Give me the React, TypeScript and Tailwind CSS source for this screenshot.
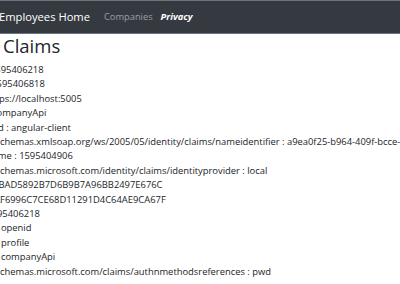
const claims = [
  "nbf : 1595406218",
  "exp : 1595406818",
  "iss : https://localhost:5005",
  "aud : companyApi",
  "client_id : angular-client",
  "http://schemas.xmlsoap.org/ws/2005/05/identity/claims/nameidentifier : a9ea0f25-b964-409f-bcce-c923266249b4",
  "auth_time : 1595404906",
  "http://schemas.microsoft.com/identity/claims/identityprovider : local",
  "sid : E1BAD5892B7D6B9B7A96BB2497E676C",
  "jti : 84AF6996C7CE68D11291D4C64AE9CA67F",
  "iat : 1595406218",
  "scope : openid",
  "scope : profile",
  "scope : companyApi",
  "http://schemas.microsoft.com/claims/authnmethodsreferences : pwd",
];

export default function App() {
  return (
    <div className="h-[284px] w-[400px] overflow-hidden bg-white font-['Open_Sans',sans-serif] text-[#212529]">
      {/* Navbar */}
      <nav className="flex h-[34px] items-center border-t border-b border-[#6c757d] bg-[#343a40]">
        <a className="-ml-[1px] mr-[10px] text-[11.2px] text-white">Employees Home</a>
        <a className="px-[4px] text-[9.3px] text-white/50">Companies</a>
        <a className="px-[4px] text-[9.3px] font-bold italic text-white">Privacy</a>
      </nav>

      <main>
        <h1 className="mb-[6px] pl-[3px] text-[18.5px] leading-[23px]">Claims</h1>
        <div className="-ml-[32px] text-[9.4px] leading-[14.4px]">
          {claims.map((c, i) => (
            <div key={i} className="whitespace-nowrap">
              {c}
            </div>
          ))}
        </div>
      </main>
    </div>
  );
}
